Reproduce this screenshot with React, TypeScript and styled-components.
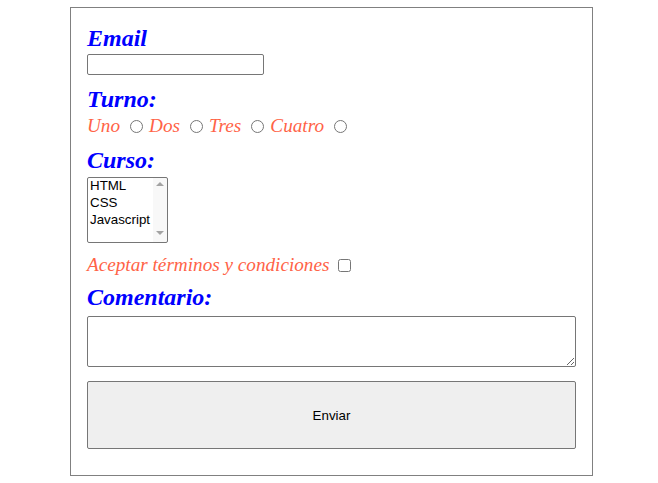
import React from 'react';
import styled, { createGlobalStyle } from 'styled-components';

const GlobalStyle = createGlobalStyle`
    body {
        margin: 0;
        background: #fff;
        font-family: "Liberation Serif", "Times New Roman", serif;
    }
`

const turnos = ['Uno', 'Dos', 'Tres', 'Cuatro'];

export default function App() {
    return (
        <>
            <GlobalStyle />
            <StyledPage>
                <StyledForm onSubmit={e => e.preventDefault()}>
                    <Heading>Email</Heading>
                    <EmailInput type="email" />

                    <Heading $top={'10px'}>Turno:</Heading>
                    <Row $top={'2px'}>
                        {turnos.map(t => (
                            <React.Fragment key={t}>
                                <Label>{t}</Label>
                                <Radio type="radio" name="turno" />
                            </React.Fragment>
                        ))}
                    </Row>

                    <Heading $top={'9px'}>Curso:</Heading>
                    <SelectBox>
                        <CourseSelect multiple>
                            <option>HTML</option>
                            <option>CSS</option>
                            <option>Javascript</option>
                        </CourseSelect>
                        <ScrollArrow $dir="up" />
                        <ScrollArrow $dir="down" />
                    </SelectBox>

                    <Row $top={'11px'}>
                        <Label>Aceptar términos y condiciones</Label>
                        <Checkbox type="checkbox" />
                    </Row>

                    <Heading $top={'7px'}>Comentario:</Heading>
                    <Comment />

                    <SubmitButton type="submit">Enviar</SubmitButton>
                </StyledForm>
            </StyledPage>
        </>
    );
}

const StyledPage = styled.div`
    padding: 7px 0 0 70px;
`

const StyledForm = styled.form`
    width: 489px;
    padding: 16px 16px 26px;
    border: 1px solid #808080;
    display: flex;
    flex-direction: column;
    align-items: flex-start;
`

const Heading = styled.span<{ $top?: string }>`
    display: block;
    margin-top: ${props => props.$top || '0'};
    color: #0000ff;
    font-size: 24px;
    font-weight: bold;
    font-style: italic;
    line-height: 28px;
`

const Row = styled.div<{ $top?: string }>`
    display: flex;
    align-items: center;
    margin-top: ${props => props.$top || '0'};
    height: 22px;
`

const Label = styled.label`
    color: #ff6347;
    font-size: 19.2px;
    font-style: italic;
    line-height: 22px;
`

const Radio = styled.input`
    width: 13px;
    height: 13px;
    margin: 1px 6px 0 10px;
`

const Checkbox = styled.input`
    width: 13px;
    height: 13px;
    margin: 1px 0 0 9px;
`

const EmailInput = styled.input`
    box-sizing: border-box;
    width: 177px;
    height: 21px;
    margin-top: 2px;
    border: 1px solid #767676;
    border-radius: 2px;
`

const SelectBox = styled.div`
    position: relative;
    margin-top: 3px;
    width: 81px;
    height: 66px;
`

const CourseSelect = styled.select`
    box-sizing: border-box;
    width: 81px;
    height: 66px;
    margin: 0;
    padding: 0;
    border: 1px solid #767676;
    border-radius: 2px;
    font-family: "Liberation Sans", Arial, sans-serif;
    font-size: 13.33px;
    color: #000;
    overflow: hidden;
    background: linear-gradient(to right, #fff 65px, #f8f8f8 65px);
`

const ScrollArrow = styled.span<{ $dir: 'up' | 'down' }>`
    position: absolute;
    right: 4px;
    ${props => props.$dir === 'up' ? 'top: 5px;' : 'bottom: 8px;'}
    width: 0;
    height: 0;
    border-left: 4px solid transparent;
    border-right: 4px solid transparent;
    ${props => props.$dir === 'up'
        ? 'border-bottom: 4px solid #a3a3a3;'
        : 'border-top: 4px solid #a3a3a3;'}
    pointer-events: none;
`

const Comment = styled.textarea`
    box-sizing: border-box;
    width: 489px;
    height: 51px;
    margin-top: 5px;
    border: 1px solid #767676;
    border-radius: 2px;
`

const SubmitButton = styled.button`
    box-sizing: border-box;
    width: 489px;
    height: 68px;
    margin-top: 14px;
    background-color: #efefef;
    border: 1px solid #767676;
    border-radius: 2px;
    font-family: "Liberation Sans", Arial, sans-serif;
    font-size: 13.33px;
    color: #000;
`
